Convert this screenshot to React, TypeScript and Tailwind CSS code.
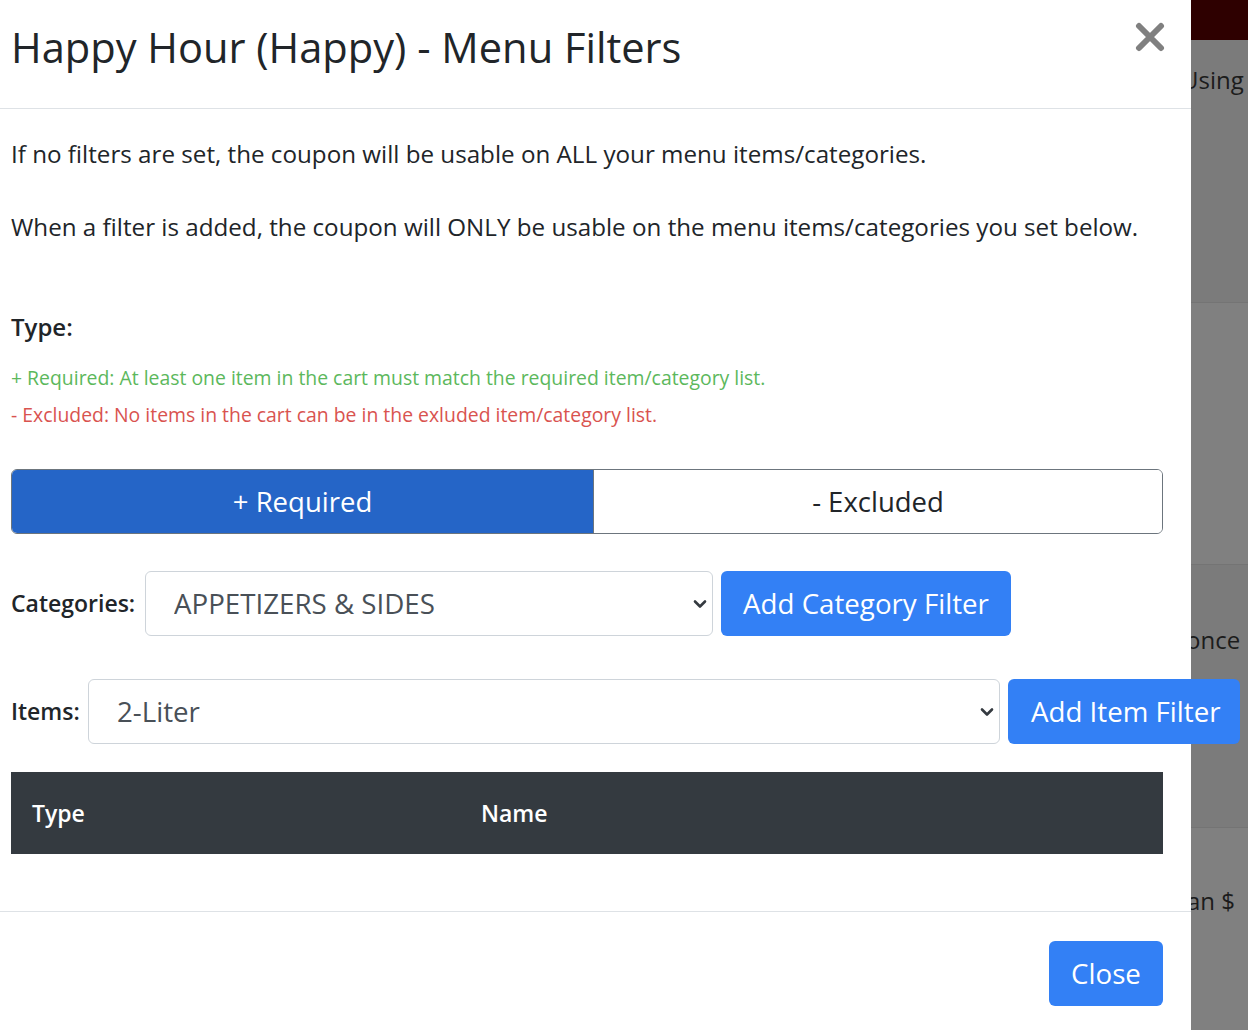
import React, { useState } from 'react';

const categories = ['APPETIZERS & SIDES', 'PIZZA', 'WINGS', 'DESSERTS', 'DRINKS'];
const items = ['2-Liter', 'Garlic Knots', 'Breadsticks', 'Mozzarella Sticks'];

function Chevron() {
  return (
    <svg className="pointer-events-none absolute right-[5px] top-1/2 -translate-y-1/2" width="16" height="12" viewBox="0 0 16 12">
      <path d="M3 3.5 L8 8.5 L13 3.5" fill="none" stroke="#343a40" strokeWidth="2.6" strokeLinecap="round" strokeLinejoin="round" />
    </svg>
  );
}

export default function App() {
  const [mode, setMode] = useState<'required' | 'excluded'>('required');
  const [category, setCategory] = useState(categories[0]);
  const [item, setItem] = useState(items[0]);

  return (
    <div className="flex w-[1248px] h-[1030px] overflow-hidden bg-[#808080]" style={{ fontFamily: '"Open Sans", "Noto Sans", sans-serif' }}>
      {/* Modal */}
      <div className="relative z-10 w-[1191px] shrink-0 bg-white text-[#212529]">
        {/* Header */}
        <div className="flex items-center justify-between h-[109px] border-b border-[#dee2e6] pl-[11px] pr-[25px]">
          <h5 className="text-[41.6px] leading-[56px] font-normal -mt-[14px]">Happy Hour (Happy) - Menu Filters</h5>
          <button className="-mt-[34px]" title="Close">
            <svg width="32" height="30" viewBox="0 0 32 30">
              <path d="M5 4 L27 26 M27 4 L5 26" stroke="#808080" strokeWidth="6" strokeLinecap="round" />
            </svg>
          </button>
        </div>

        {/* Body */}
        <div className="pt-[29px] pl-[11px] pr-[28px] pb-[57px]">
          <p className="text-[24.2px] leading-[31px]">If no filters are set, the coupon will be usable on ALL your menu items/categories.</p>
          <p className="mt-[42px] text-[24.2px] leading-[31px]">When a filter is added, the coupon will ONLY be usable on the menu items/categories you set below.</p>

          <div className="mt-[69px] text-[24px] leading-[31px] font-semibold">Type:</div>
          <div className="mt-[23px] text-[19.4px] leading-[26px] text-[#5cb85c]">+ Required: At least one item in the cart must match the required item/category list.</div>
          <div className="mt-[11px] text-[19.4px] leading-[26px] text-[#d9534f]">- Excluded: No items in the cart can be in the exluded item/category list.</div>

          <div className="mt-[41px] flex h-[65px] rounded-[6px] border border-[#6c757d] overflow-hidden">
            <button
              onClick={() => setMode('required')}
              className={`w-[581px] text-[27.5px] ${mode === 'required' ? 'bg-[#2565c7] text-white' : 'bg-white text-[#212529]'}`}
            >
              + Required
            </button>
            <button
              onClick={() => setMode('excluded')}
              className={`flex-1 border-l border-[#6c757d] text-[27.5px] ${mode === 'excluded' ? 'bg-[#2565c7] text-white' : 'bg-white text-[#212529]'}`}
            >
              - Excluded
            </button>
          </div>

          <div className="mt-[37px] flex items-center h-[65px]">
            <label className="shrink-0 text-[23px] font-semibold w-[134px]">Categories:</label>
            <div className="relative w-[568px] shrink-0 h-full">
              <select
                value={category}
                onChange={(e) => setCategory(e.target.value)}
                className="appearance-none w-full h-full rounded-[6px] border border-[#ced4da] bg-white pl-[28px] text-[27.7px] text-[#495057] outline-none"
              >
                {categories.map((c) => <option key={c}>{c}</option>)}
              </select>
              <Chevron />
            </div>
            <button className="shrink-0 ml-[8px] h-full w-[290px] rounded-[6px] bg-[#3380f5] text-white text-[27.7px]">Add Category Filter</button>
          </div>

          <div className="mt-[43px] flex items-center h-[65px]">
            <label className="shrink-0 text-[23px] font-semibold w-[77px]">Items:</label>
            <div className="relative w-[912px] shrink-0 h-full">
              <select
                value={item}
                onChange={(e) => setItem(e.target.value)}
                className="appearance-none w-full h-full rounded-[6px] border border-[#ced4da] bg-white pl-[28px] text-[27.7px] text-[#495057] outline-none"
              >
                {items.map((c) => <option key={c}>{c}</option>)}
              </select>
              <Chevron />
            </div>
            <button className="ml-[8px] h-full w-[232px] shrink-0 rounded-[6px] bg-[#3380f5] text-white text-[27.7px] text-left pl-[23px]">Add Item Filter</button>
          </div>

          <table className="mt-[28px] w-full border-collapse">
            <thead>
              <tr className="bg-[#343a40] text-white h-[82px]">
                <th className="w-[470px] text-left pl-[21px] text-[23px] font-semibold">Type</th>
                <th className="text-left text-[23px] font-semibold">Name</th>
              </tr>
            </thead>
          </table>
        </div>

        {/* Footer */}
        <div className="border-t border-[#dee2e6] pt-[29px] pr-[28px] flex justify-end">
          <button className="h-[65px] w-[114px] rounded-[6px] bg-[#3380f5] text-white text-[27.7px]">Close</button>
        </div>
      </div>

      {/* Page behind the backdrop */}
      <div className="flex-1 flex flex-col text-[#1c1c1c] text-[24px] whitespace-nowrap">
        <div className="h-[40px] bg-[#2e0000]"></div>
        <div className="h-[263px] bg-[#7b7b7b] border-b border-[#747474] pt-[22px]">
          <div className="-ml-[10px]">Using</div>
        </div>
        <div className="h-[262px] bg-[#808080] border-b border-[#747474]"></div>
        <div className="h-[263px] bg-[#7b7b7b] border-b border-[#747474] pt-[57px]">
          <div className="-ml-[5px]">once</div>
        </div>
        <div className="flex-1 bg-[#808080] pt-[55px]">
          <div className="-ml-[4px]">an $</div>
        </div>
      </div>
    </div>
  );
}
